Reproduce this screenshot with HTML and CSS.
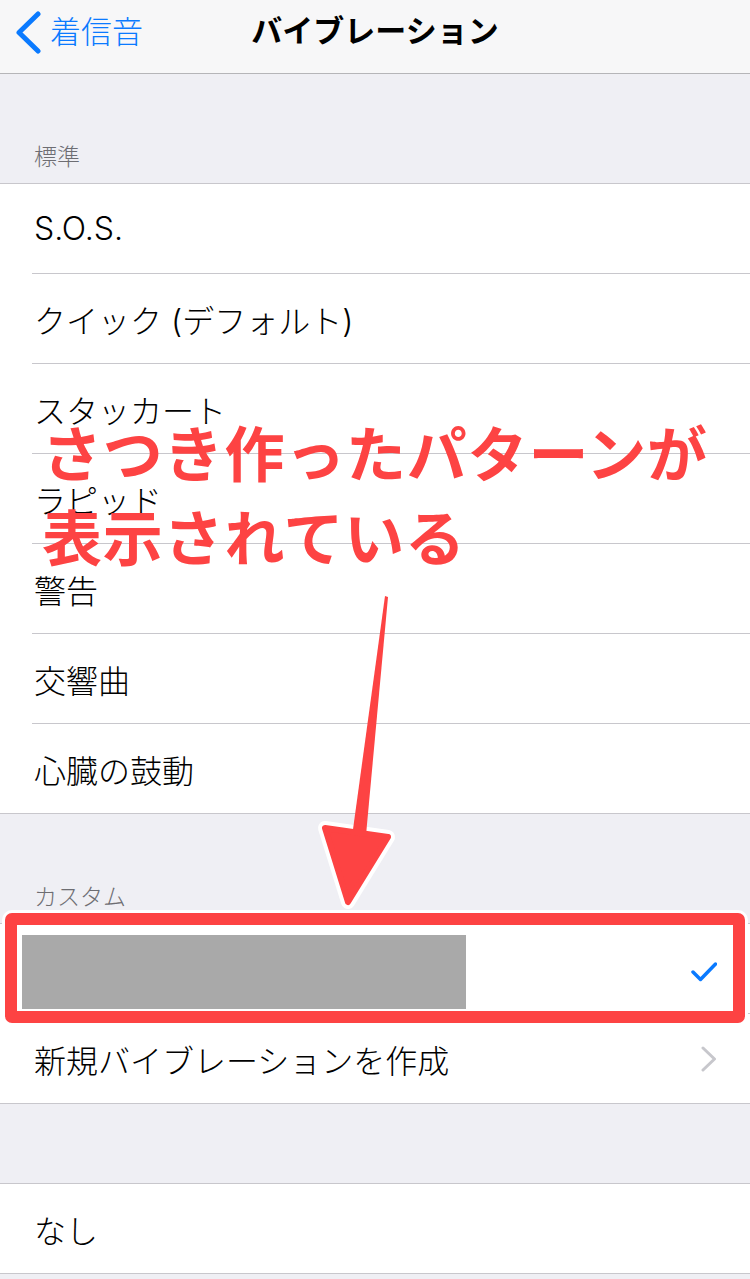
FILE: index.html
```html
<!DOCTYPE html>
<html lang="ja">
  <head>
    <meta charset="UTF-8" />
    <meta name="viewport" content="width=device-width, initial-scale=1.0" />
    <title>バイブレーション</title>
    <link rel="stylesheet" href="styles.css">
  </head>
  <body>
    <div class="screen">
      <div class="nav-bar">
        <a class="nav-back" href="#">
          <svg class="back-icon" width="30" height="50" viewBox="0 0 30 50">
            <polyline points="22,10 3,28.5 22,47" />
          </svg>
          <span>着信音</span>
        </a>
        <h1 class="nav-title">バイブレーション</h1>
      </div>

      <div class="section-header">標準</div>
      <div class="section">
        <div class="row">S.O.S.</div>
        <div class="row">クイック (デフォルト)</div>
        <div class="row">スタッカート</div>
        <div class="row">ラピッド</div>
        <div class="row">警告</div>
        <div class="row">交響曲</div>
        <div class="row">心臓の鼓動</div>
      </div>

      <div class="section-header">カスタム</div>
      <div class="section">
        <div class="row row-custom">
          <div class="redacted"></div>
          <svg class="check-icon" width="26" height="20" viewBox="0 0 26 20">
            <polyline points="2,10 9.5,17.5 24.5,2" />
          </svg>
        </div>
        <div class="row">
          <span>新規バイブレーションを作成</span>
          <svg class="chevron-icon" width="16" height="26" viewBox="0 0 16 26">
            <polyline points="2,2 13.5,13 2,24" />
          </svg>
        </div>
      </div>

      <div class="section-gap"></div>
      <div class="section">
        <div class="row">なし</div>
      </div>

      <!-- annotation layer -->
      <div class="note-text">さつき作ったパターンが<br />表示されている</div>
      <div class="note-box"></div>
      <svg class="note-arrow" width="750" height="1279" viewBox="0 0 750 1279">
        <polygon class="arrow-outline" points="325,828 388,837 348,902" />
        <polygon class="arrow-shaft" points="385,596 388,597 365,846 351,844" />
        <polygon class="arrow-head" points="325,828 388,837 348,902" />
      </svg>
    </div>
  </body>
</html>
```

FILE: styles.css
```css
body {
  margin: 0;
  background-color: #efeff4;
  font-family: "Inter", "Noto Sans CJK JP", sans-serif;
  color: #000;
}
.screen {
  position: relative;
  width: 750px;
  height: 1279px;
  overflow: hidden;
  background-color: #efeff4;
}
.nav-bar {
  position: relative;
  height: 73px;
  background-color: #f7f7f8;
  border-bottom: 1px solid #b5b5b8;
  display: flex;
  align-items: center;
  justify-content: center;
}
.nav-back {
  position: absolute;
  left: 16px;
  top: 0;
  height: 58px;
  display: flex;
  align-items: center;
  gap: 4px;
  color: #0a7aff;
  text-decoration: none;
  font-family: "Noto Sans CJK JP", sans-serif;
  font-size: 31px;
  font-weight: 300;
}
.back-icon polyline {
  fill: none;
  stroke: #0a7aff;
  stroke-width: 5;
  stroke-linecap: round;
  stroke-linejoin: round;
}
.nav-title {
  margin: 0 0 15px;
  font-family: "Noto Sans CJK JP", sans-serif;
  font-size: 31px;
  font-weight: bold;
  line-height: 40px;
}
.section-header {
  height: 109px;
  box-sizing: border-box;
  display: flex;
  align-items: flex-end;
  padding: 0 0 13px 34px;
  font-family: "Noto Sans CJK JP", sans-serif;
  font-size: 23px;
  font-weight: 300;
  line-height: 30px;
  color: #6d6d72;
}
.section-gap {
  height: 79px;
}
.section {
  background-color: #fff;
  border-top: 1px solid #c8c7cc;
  border-bottom: 1px solid #c8c7cc;
}
.row {
  height: 89px;
  margin-left: 32px;
  padding: 0 33px 0 2px;
  display: flex;
  align-items: center;
  justify-content: space-between;
  font-size: 32px;
  font-weight: 300;
  border-bottom: 1px solid #c8c7cc;
}
.row:last-child {
  border-bottom: none;
}
.row-custom {
  margin-left: 22px;
  padding-left: 0;
  padding-right: 33px;
}
.redacted {
  width: 444px;
  height: 74px;
  margin-top: 6px;
  background-color: #a9a9a9;
}
.check-icon {
  margin-top: 6px;
}
.check-icon polyline {
  fill: none;
  stroke: #0a7aff;
  stroke-width: 3.5;
  stroke-linecap: round;
  stroke-linejoin: round;
}
.chevron-icon polyline {
  fill: none;
  stroke: #c7c7cc;
  stroke-width: 3;
  stroke-linecap: round;
  stroke-linejoin: round;
}
.note-text {
  position: absolute;
  left: 42px;
  top: 409px;
  font-family: "Noto Sans CJK JP", sans-serif;
  font-size: 60px;
  font-weight: bold;
  line-height: 84px;
  letter-spacing: 0.8px;
  color: #fd4343;
  white-space: nowrap;
}
.note-box {
  position: absolute;
  left: 5px;
  top: 913px;
  width: 740px;
  height: 110px;
  box-sizing: border-box;
  border: 12px solid #fd4343;
  border-radius: 7px;
  box-shadow: 0 0 0 3px #fff;
}
.note-arrow {
  position: absolute;
  left: 0;
  top: 0;
  pointer-events: none;
}
.arrow-outline {
  fill: #fff;
  stroke: #fff;
  stroke-width: 14;
  stroke-linejoin: round;
}
.arrow-shaft {
  fill: #fd4343;
}
.arrow-head {
  fill: #fd4343;
  stroke: #fd4343;
  stroke-width: 6;
  stroke-linejoin: round;
}
```
